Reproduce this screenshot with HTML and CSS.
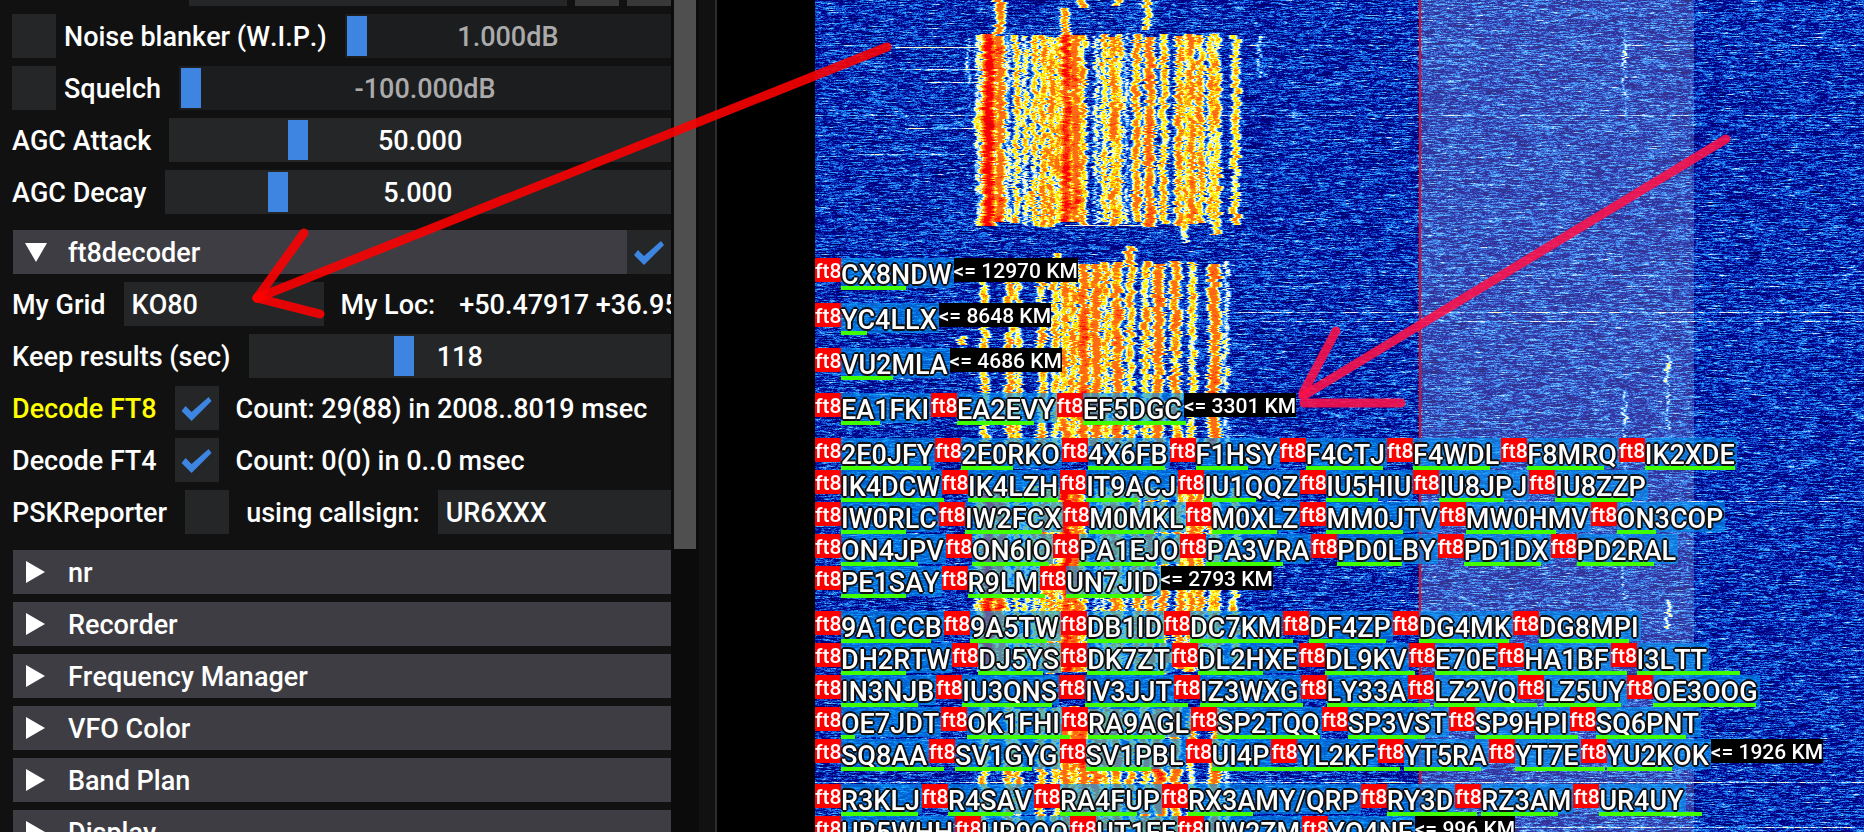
FILE: index.html
```html
<!DOCTYPE html>
<html lang="en">
<head>
<meta charset="utf-8">
<title>ft8decoder</title>
<link rel="stylesheet" href="styles.css">
</head>
<body>
<div class="app">
  <aside class="side">
    <div class="menu">
      <div class="row row-top">
        <input class="field top-field" type="text" aria-label="Preset">
        <button class="square" type="button" aria-label="Previous"></button>
        <button class="square" type="button" aria-label="Next"></button>
      </div>
      <div class="row">
        <div class="option"><input class="check" type="checkbox" id="nb"><label for="nb">Noise blanker (W.I.P.)</label></div>
        <div class="slider off"><input type="range" min="0" max="1000" value="0" aria-label="Noise blanker level"><output>1.000dB</output></div>
      </div>
      <div class="row">
        <div class="option"><input class="check" type="checkbox" id="sq"><label for="sq">Squelch</label></div>
        <div class="slider off"><input type="range" min="0" max="1000" value="0" aria-label="Squelch level"><output>-100.000dB</output></div>
      </div>
      <div class="row">
        <label for="attack">AGC Attack</label>
        <div class="slider"><input type="range" id="attack" min="0" max="1000" value="245"><output>50.000</output></div>
      </div>
      <div class="row">
        <label for="decay">AGC Decay</label>
        <div class="slider"><input type="range" id="decay" min="0" max="1000" value="210"><output>5.000</output></div>
      </div>

      <div class="head-row">
        <button class="head" type="button" aria-expanded="true"><svg class="tri" viewBox="0 0 22 22"><path d="M0 2H22L11 21Z"/></svg><span>ft8decoder</span></button>
        <input class="check" type="checkbox" checked aria-label="Enable ft8decoder">
      </div>
      <div class="row">
        <label for="grid">My Grid</label>
        <input class="field grid-field" type="text" id="grid" value="KO80">
        <span>My Loc:</span>
        <span class="loc">+50.47917 +36.95833</span>
      </div>
      <div class="row">
        <label for="keep">Keep results (sec)</label>
        <div class="slider"><input type="range" id="keep" min="0" max="1000" value="360"><output>118</output></div>
      </div>
      <div class="row">
        <label class="active" for="ft8">Decode FT8</label>
        <input class="check" type="checkbox" id="ft8" checked>
        <span>Count: 29(88) in 2008..8019 msec</span>
      </div>
      <div class="row">
        <label for="ft4">Decode FT4</label>
        <input class="check" type="checkbox" id="ft4" checked>
        <span>Count: 0(0) in 0..0 msec</span>
      </div>
      <div class="row">
        <label for="psk">PSKReporter</label>
        <input class="check" type="checkbox" id="psk">
        <label for="callsign">using callsign:</label>
        <input class="field grow" type="text" id="callsign" value="UR6XXX">
      </div>

      <div class="heads">
        <button class="head" type="button"><svg class="tri" viewBox="0 0 22 22"><path d="M1 0V22L20 11Z"/></svg><span>nr</span></button>
        <button class="head" type="button"><svg class="tri" viewBox="0 0 22 22"><path d="M1 0V22L20 11Z"/></svg><span>Recorder</span></button>
        <button class="head" type="button"><svg class="tri" viewBox="0 0 22 22"><path d="M1 0V22L20 11Z"/></svg><span>Frequency Manager</span></button>
        <button class="head" type="button"><svg class="tri" viewBox="0 0 22 22"><path d="M1 0V22L20 11Z"/></svg><span>VFO Color</span></button>
        <button class="head" type="button"><svg class="tri" viewBox="0 0 22 22"><path d="M1 0V22L20 11Z"/></svg><span>Band Plan</span></button>
        <button class="head" type="button"><svg class="tri" viewBox="0 0 22 22"><path d="M1 0V22L20 11Z"/></svg><span>Display</span></button>
      </div>
    </div>
    <div class="track"><div class="thumb"></div></div>
    <div class="edge"></div>
  </aside>
  <div class="scale"></div>
  <main class="fall">
    <canvas class="noise" id="fall"></canvas>
    <div class="band"></div>
    <div class="groups">
      <div class="line"><b>ft8</b><span class="call">CX8NDW<i style="width:65px"></i></span><em>&lt;= 12970 KM</em></div>
      <div class="line"><b>ft8</b><span class="call">YC4LLX<i style="width:26px"></i></span><em>&lt;= 8648 KM</em></div>
      <div class="line"><b>ft8</b><span class="call">VU2MLA<i style="width:52px"></i></span><em>&lt;= 4686 KM</em></div>
      <div class="line"><b>ft8</b><span class="call">EA1FKI<i style="width:39px"></i></span><b>ft8</b><span class="call">EA2EVY<i style="width:77px"></i></span><b>ft8</b><span class="call">EF5DGC<i style="width:103px"></i></span><em>&lt;= 3301 KM</em></div>
      <div class="group">
        <div class="line"><b>ft8</b><span class="call">2E0JFY<i style="width:90px"></i></span><b>ft8</b><span class="call">2E0RKO<i style="width:52px"></i></span><b>ft8</b><span class="call">4X6FB<i style="width:77px"></i></span><b>ft8</b><span class="call">F1HSY<i style="width:52px"></i></span><b>ft8</b><span class="call">F4CTJ<i style="width:77px"></i></span><b>ft8</b><span class="call">F4WDL<i style="width:77px"></i></span><b>ft8</b><span class="call">F8MRQ<i style="width:77px"></i></span><b>ft8</b><span class="call">IK2XDE<i style="width:90px"></i></span></div>
        <div class="line"><b>ft8</b><span class="call">IK4DCW<i style="width:103px"></i></span><b>ft8</b><span class="call">IK4LZH<i style="width:90px"></i></span><b>ft8</b><span class="call">IT9ACJ<i style="width:52px"></i></span><b>ft8</b><span class="call">IU1QQZ<i style="width:52px"></i></span><b>ft8</b><span class="call">IU5HIU<i style="width:52px"></i></span><b>ft8</b><span class="call">IU8JPJ<i style="width:65px"></i></span><b>ft8</b><span class="call">IU8ZZP<i style="width:77px"></i></span></div>
        <div class="line"><b>ft8</b><span class="call">IW0RLC<i style="width:65px"></i></span><b>ft8</b><span class="call">IW2FCX<i style="width:77px"></i></span><b>ft8</b><span class="call">M0MKL<i style="width:65px"></i></span><b>ft8</b><span class="call">M0XLZ<i style="width:65px"></i></span><b>ft8</b><span class="call">MM0JTV<i style="width:77px"></i></span><b>ft8</b><span class="call">MW0HMV<i style="width:90px"></i></span><b>ft8</b><span class="call">ON3COP<i style="width:39px"></i></span></div>
        <div class="line"><b>ft8</b><span class="call">ON4JPV<i style="width:77px"></i></span><b>ft8</b><span class="call">ON6IO<i style="width:77px"></i></span><b>ft8</b><span class="call">PA1EJO<i style="width:77px"></i></span><b>ft8</b><span class="call">PA3VRA<i style="width:77px"></i></span><b>ft8</b><span class="call">PD0LBY<i style="width:65px"></i></span><b>ft8</b><span class="call">PD1DX<i style="width:77px"></i></span><b>ft8</b><span class="call">PD2RAL<i style="width:77px"></i></span></div>
        <div class="line"><b>ft8</b><span class="call">PE1SAY<i style="width:65px"></i></span><b>ft8</b><span class="call">R9LM<i style="width:77px"></i></span><b>ft8</b><span class="call">UN7JID<i style="width:77px"></i></span><em>&lt;= 2793 KM</em></div>
      </div>
      <div class="group">
        <div class="line"><b>ft8</b><span class="call">9A1CCB<i style="width:90px"></i></span><b>ft8</b><span class="call">9A5TW<i style="width:77px"></i></span><b>ft8</b><span class="call">DB1ID<i style="width:77px"></i></span><b>ft8</b><span class="call">DC7KM<i style="width:103px"></i></span><b>ft8</b><span class="call">DF4ZP<i style="width:77px"></i></span><b>ft8</b><span class="call">DG4MK<i style="width:90px"></i></span><b>ft8</b><span class="call">DG8MPI<i style="width:90px"></i></span></div>
        <div class="line"><b>ft8</b><span class="call">DH2RTW<i style="width:65px"></i></span><b>ft8</b><span class="call">DJ5YS<i style="width:65px"></i></span><b>ft8</b><span class="call">DK7ZT<i style="width:77px"></i></span><b>ft8</b><span class="call">DL2HXE<i style="width:65px"></i></span><b>ft8</b><span class="call">DL9KV<i style="width:90px"></i></span><b>ft8</b><span class="call">E70E<i style="width:90px"></i></span><b>ft8</b><span class="call">HA1BF<i style="width:103px"></i></span><b>ft8</b><span class="call">I3LTT<i style="width:103px"></i></span></div>
        <div class="line"><b>ft8</b><span class="call">IN3NJB<i style="width:77px"></i></span><b>ft8</b><span class="call">IU3QNS<i style="width:90px"></i></span><b>ft8</b><span class="call">IV3JJT<i style="width:103px"></i></span><b>ft8</b><span class="call">IZ3WXG<i style="width:103px"></i></span><b>ft8</b><span class="call">LY33A<i style="width:103px"></i></span><b>ft8</b><span class="call">LZ2VQ<i style="width:103px"></i></span><b>ft8</b><span class="call">LZ5UY<i style="width:77px"></i></span><b>ft8</b><span class="call">OE3OOG<i style="width:103px"></i></span></div>
        <div class="line"><b>ft8</b><span class="call">OE7JDT<i style="width:14px"></i></span><b>ft8</b><span class="call">OK1FHI<i style="width:103px"></i></span><b>ft8</b><span class="call">RA9AGL<i style="width:77px"></i></span><b>ft8</b><span class="call">SP2TQQ<i style="width:103px"></i></span><b>ft8</b><span class="call">SP3VST<i style="width:77px"></i></span><b>ft8</b><span class="call">SP9HPI<i style="width:103px"></i></span><b>ft8</b><span class="call">SQ6PNT<i style="width:90px"></i></span></div>
        <div class="line"><b>ft8</b><span class="call">SQ8AA<i style="width:103px"></i></span><b>ft8</b><span class="call">SV1GYG<i style="width:77px"></i></span><b>ft8</b><span class="call">SV1PBL<i style="width:65px"></i></span><b>ft8</b><span class="call">UI4P<i style="width:90px"></i></span><b>ft8</b><span class="call">YL2KF<i style="width:103px"></i></span><b>ft8</b><span class="call">YT5RA<i style="width:77px"></i></span><b>ft8</b><span class="call">YT7E<i style="width:90px"></i></span><b>ft8</b><span class="call">YU2KOK<i style="width:65px"></i></span><em>&lt;= 1926 KM</em></div>
      </div>
      <div class="group">
        <div class="line"><b>ft8</b><span class="call">R3KLJ<i style="width:77px"></i></span><b>ft8</b><span class="call">R4SAV<i style="width:65px"></i></span><b>ft8</b><span class="call">RA4FUP<i style="width:77px"></i></span><b>ft8</b><span class="call">RX3AMY/QRP<i style="width:65px"></i></span><b>ft8</b><span class="call">RY3D<i style="width:90px"></i></span><b>ft8</b><span class="call">RZ3AM<i style="width:77px"></i></span><b>ft8</b><span class="call">UR4UY<i style="width:103px"></i></span></div>
        <div class="line"><b>ft8</b><span class="call">UR5WHH<i style="width:77px"></i></span><b>ft8</b><span class="call">UR9QQ<i style="width:77px"></i></span><b>ft8</b><span class="call">UT1FF<i style="width:77px"></i></span><b>ft8</b><span class="call">UW2ZM<i style="width:77px"></i></span><b>ft8</b><span class="call">YO4NF<i style="width:77px"></i></span><em>&lt;= 996 KM</em></div>
      </div>
    </div>
  </main>
  <svg class="arrows" viewBox="0 0 1864 832" preserveAspectRatio="none">
    <g stroke="#f00" stroke-opacity=".88"><path d="M887 47L257 298"/><path d="M304 233L257 298"/><path d="M257 298L320 314"/></g>
    <g stroke="#ff1048" stroke-opacity=".88"><path d="M1726 139L1303 396"/><path d="M1336 331L1303 393"/><path d="M1304 403L1401 403"/></g>
  </svg>
</div>
<script src="waterfall.js"></script>
</body>
</html>
```
FILE: styles.css
```css
* { box-sizing: border-box; }

body {
  margin: 0;
  background: #000;
  color: #fff;
  font: 500 27px/34px Roboto, sans-serif;
  font-kerning: none;
}

.app {
  position: relative;
  display: flex;
  height: 100vh;
  overflow: hidden;
}

/* settings menu */
.side {
  display: flex;
  flex: 0 0 717px;
  min-width: 0;
  background: #111;
  border-right: 2px solid #2c2c2c;
}

.menu {
  flex: 1;
  min-width: 0;
  padding-left: 12px;
  display: flex;
  flex-direction: column;
  gap: 8px;
  overflow: hidden;
}

.row {
  display: flex;
  align-items: center;
  flex: none;
  gap: 17px;
  height: 44px;
  white-space: nowrap;
}

.row-top {
  gap: 8px;
  margin-top: -38px;
  padding-left: 177px;
}

.option {
  display: flex;
  align-items: center;
  gap: 8px;
}

label, .row > span, .head > span { padding-top: 2px; }
label { padding-right: 1px; }

.active { color: #ff0; }
.row > .loc { padding-left: 7px; }

.field {
  height: 44px;
  min-width: 0;
  border: 0;
  padding: 2px 8px 0;
  background: #242628;
  color: #fff;
  font: inherit;
}

.grid-field { width: 200px; flex: none; }
.grow, .top-field { flex: 1; }

.square {
  width: 44px;
  height: 44px;
  border: 0;
  background: #383838;
}

.check {
  appearance: none;
  flex: none;
  width: 44px;
  height: 44px;
  margin: 0;
  background: #242628;
}

.check:checked::before {
  content: "";
  display: block;
  width: 44px;
  height: 44px;
  background: #3d85e0;
  clip-path: polygon(7px 25px, 11px 20px, 17px 26px, 34px 11px, 37px 15px, 17px 35px);
}

.slider {
  position: relative;
  flex: 1;
  height: 44px;
  padding: 2px;
  background: #242628;
}

.slider input {
  appearance: none;
  display: block;
  width: 100%;
  height: 40px;
  margin: 0;
  background: none;
}

.slider input::-webkit-slider-thumb {
  appearance: none;
  width: 20px;
  height: 40px;
  background: #3d85e0;
}

.slider output {
  position: absolute;
  inset: 6px 0 4px;
  text-align: center;
  pointer-events: none;
}

.slider.off { background: #1c1d1f; }
.slider.off output { color: #aaa; }

.head-row {
  display: flex;
  flex: none;
  margin-top: 8px;
  padding-left: 1px;
}

.heads {
  display: flex;
  flex: none;
  flex-direction: column;
  gap: 8px;
  margin-top: 8px;
  padding-left: 1px;
}

.head {
  display: flex;
  align-items: center;
  flex: 1 0 44px;
  gap: 21px;
  height: 44px;
  border: 0;
  padding: 0 12px;
  background: #3e3d43;
  color: #fff;
  font: inherit;
  font-kerning: inherit;
}

.tri {
  width: 22px;
  height: 22px;
  fill: #fff;
}

.track {
  flex: 0 0 28px;
  padding: 0 3px;
  background: #0b0b0b;
}

.thumb {
  height: 66%;
  background: #4f4f4f;
}

.edge { flex: 0 0 16px; }

.scale { flex: 0 0 98px; }

/* waterfall */
.fall {
  position: relative;
  flex: 1;
  min-width: 0;
  overflow: hidden;
}

.noise {
  position: absolute;
  inset: 0;
  width: 100%;
  height: 100%;
}

.band {
  position: absolute;
  top: 0;
  bottom: 0;
  left: 604px;
  width: 275px;
  border-left: 2px solid #e00c20;
  background: rgba(255, 255, 255, .2);
}

.groups {
  position: relative;
  display: flex;
  flex-direction: column;
  gap: 13px;
  padding-top: 258px;
}

.line {
  display: flex;
  align-items: flex-start;
  height: 32px;
  white-space: nowrap;
}

.line b, .line em {
  flex: none;
  height: 24px;
  font: 500 21px/26px Roboto, sans-serif;
  font-kerning: none;
}

.line b {
  width: 26px;
  background: #f00;
}

.line em { background: #000; }

.call {
  position: relative;
  height: 30px;
  padding-right: 2px;
  background: rgba(0, 150, 245, .62);
  text-shadow: -1px -1px #111, 1px -1px #111, -1px 1px #111, 1px 1px #111, 0 2px #111, 2px 0 #111, 0 -2px #111, -2px 0 #111;
}

.call i {
  position: absolute;
  left: 0;
  top: 28px;
  height: 4px;
  background: #40ff00;
}

.arrows {
  position: absolute;
  inset: 0;
  width: 100%;
  height: 100%;
  fill: none;
  stroke-width: 9;
  stroke-linecap: round;
  pointer-events: none;
}
```
FILE: waterfall.js
```js
// Paints the waterfall: band noise, FT8 slots and static lines.
const canvas = document.getElementById('fall');
const W = canvas.width = canvas.clientWidth;
const H = canvas.height = canvas.clientHeight;
const ctx = canvas.getContext('2d');

const stops = [
  [0, 0, 32], [0, 0, 48], [0, 0, 80], [0, 0, 145], [30, 144, 255], [255, 255, 255],
  [255, 255, 0], [254, 109, 22], [254, 109, 22], [255, 0, 0], [255, 0, 0], [198, 0, 0]
];

let seed = 20231;
function rnd() {
  seed = (seed * 1664525 + 1013904223) >>> 0;
  return seed / 4294967296;
}

const level = new Float32Array(W * H);
for (let y = 0; y < H; y++) {
  let v = 0;
  const rowBias = (rnd() - 0.5) * 0.16;
  for (let x = 0; x < W; x++) {
    v = v * 0.74 + (rnd() + rnd() - 1) * 0.78;
    level[y * W + x] = 3.3 + rowBias + v;
  }
}

// One station: x centre, half width, peak level, first and last row.
function trace(cx, hw, peak, y0, y1) {
  let drift = 0, hold = 0, fade = 0;
  for (let y = Math.max(0, y0); y < Math.min(H, y1); y++) {
    if (rnd() < 0.6) hold = (rnd() - 0.5) * 5;
    drift = drift * 0.9 + (rnd() - 0.5) * 0.9;
    fade = fade * 0.88 + (rnd() - 0.5) * 0.8;
    const c = cx + hold + drift;
    let grain = 0;
    for (let x = Math.floor(c - hw - 5); x <= c + hw + 5; x++) {
      if (x < 0 || x >= W) continue;
      const d = Math.abs(x - c);
      const fall = d < hw * 0.4 ? 0 : (d - hw * 0.4) * 0.75;
      grain = grain * 0.6 + (rnd() - 0.5) * 0.8;
      const l = peak + fade - fall + grain;
      const i = y * W + x;
      if (l > level[i]) level[i] = l;
    }
  }
}

const slotA = [
  [163, 3, 5.2], [173, 6, 9.2], [184, 5, 7.6], [192, 3, 4.8], [201, 3, 6.2], [210, 3, 5.7],
  [219, 3, 6.1], [228, 4, 6.8], [236, 4, 6.7], [243, 3, 6.4], [251, 5, 8.9], [260, 5, 7.7],
  [267, 3, 6.4], [281, 2, 5], [289, 3, 6.2], [298, 5, 7], [304, 3, 6.1], [310, 2, 4.7],
  [321, 4, 6.9], [334, 5, 7.6], [348, 4, 6.5], [364, 4, 6.9], [371, 3, 6], [376, 4, 7.1],
  [385, 4, 6.6], [396, 3, 6.1], [401, 4, 6.3], [420, 4, 6.1]
];
const slotB = [
  [169, 4, 6.2], [194, 4, 6.6], [202, 3, 6], [226, 4, 6.7], [240, 4, 6.1], [249, 5, 7.1],
  [258, 4, 6.6], [268, 6, 7.9], [280, 6, 7.6], [290, 4, 6.5], [302, 6, 7.3], [315, 4, 6.5],
  [330, 4, 6.5], [343, 6, 7.6], [360, 5, 7.1], [377, 4, 6.1], [399, 6, 7.4], [411, 3, 5.1]
];
function slot(list, y0, y1) {
  for (const [x, w, p] of list) {
    trace(x, w, p, y0 + Math.round(rnd() * 4), y1 + Math.round(rnd() * 5 - 3));
  }
}
slot(slotA, 33, 225);
slot(slotB, 260, 447);
slot(slotA, 486, 672);
slot(slotB, 706, H);

trace(184, 4, 7.4, 0, 34);
trace(250, 4, 6.8, 8, 36);
trace(266, 4, 6.6, 0, 8);
trace(301, 4, 6.8, 0, 6);
trace(331, 3, 6.1, 0, 30);
trace(370, 4, 6.3, 222, 243);
trace(400, 3, 6, 222, 235);
trace(315, 4, 6.6, 246, 264);
trace(240, 3, 6.4, 253, 264);
trace(147, 3, 6.3, 336, 345);
trace(443, 2, 4.7, 36, 78);
trace(152, 1, 4.1, 30, 120);
trace(809, 1, 4.3, 28, 115);
trace(809, 1, 4.2, 390, 600);
trace(852, 1, 4.9, 355, 385);
trace(852, 1, 5.4, 600, 629);
trace(852, 1, 4.2, 385, 430);

// Static bursts: x range, row and strength.
const bursts = [
  [80, 165, 47, 1.8], [85, 165, 69, 1.2], [110, 165, 82, 1.3], [0, W, 115, 0.8], [90, 160, 128, 1.4],
  [30, 160, 154, 0.9], [0, W, 45, 0.4], [415, W, 312, 1.2], [415, W, 321, 0.8],
  [420, W, 275, 0.6], [420, W, 286, 0.6],
  [560, W, 501, 0.8], [0, W, 782, 1.2], [0, W, 827, 1.3], [250, 330, 225, 1.6], [600, W, 650, 0.4]
];
for (const [x0, x1, y, s] of bursts) {
  for (let x = x0; x < Math.min(W, x1); x++) {
    const i = y * W + x;
    if (y < H && level[i] < 5) level[i] = Math.min(5.3, level[i] + s);
  }
}

const img = ctx.createImageData(W, H);
for (let i = 0; i < level.length; i++) {
  const l = Math.max(0, Math.min(10.99, level[i]));
  const a = stops[Math.floor(l)], b = stops[Math.floor(l) + 1], t = l - Math.floor(l);
  for (let k = 0; k < 3; k++) img.data[i * 4 + k] = a[k] + (b[k] - a[k]) * t;
  img.data[i * 4 + 3] = 255;
}
ctx.putImageData(img, 0, 0);
```
